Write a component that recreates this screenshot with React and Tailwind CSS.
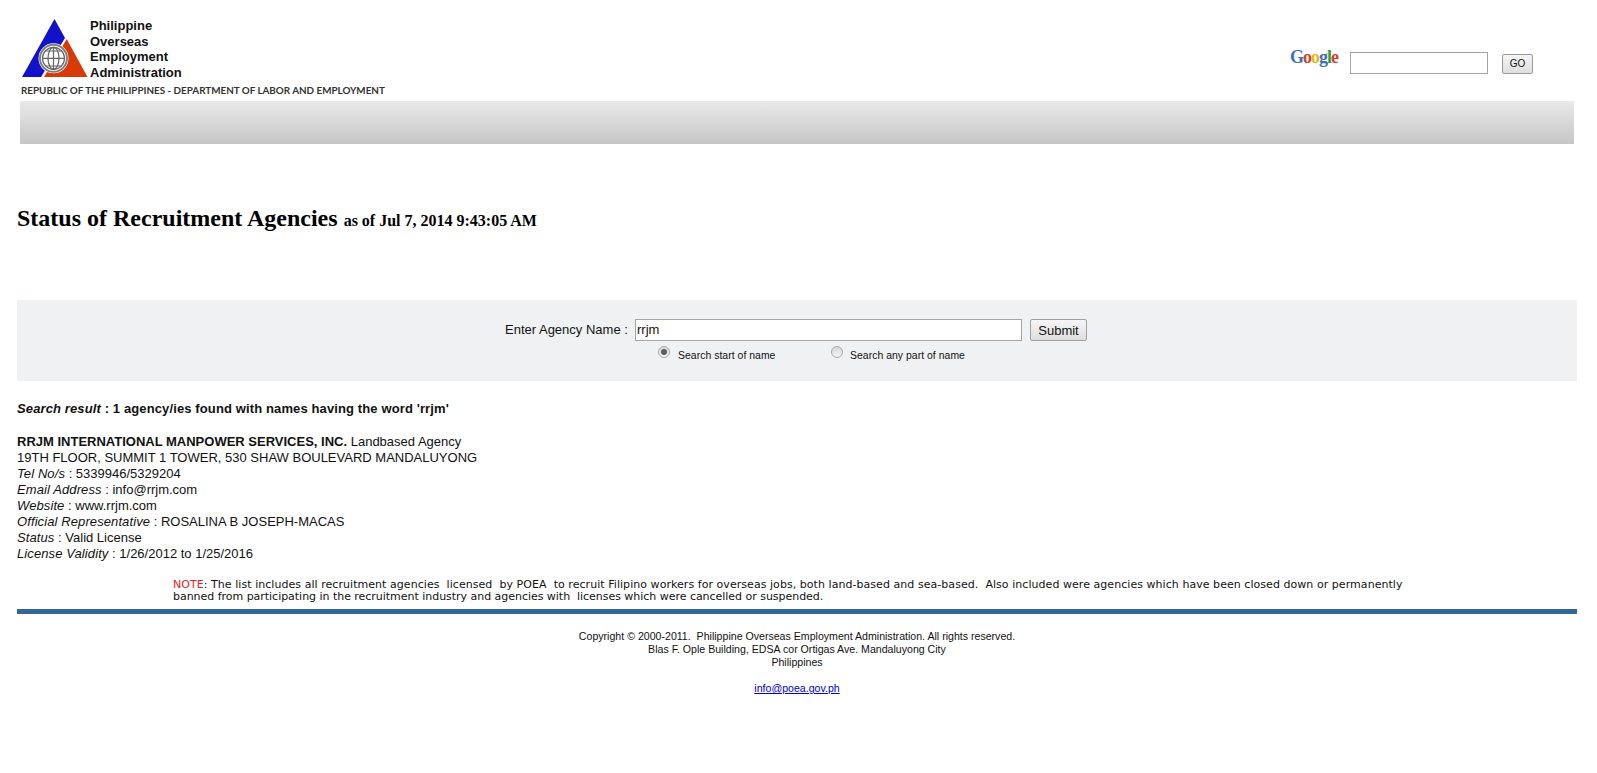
import React from "react";

function Logo() {
  return (
    <svg width="68" height="59" viewBox="0 0 68 59" className="block">
      <path d="M32.500 0 L43 19 L19 58 L0 58 Z" fill="#1212c8" />
      <path d="M44.700 20 L65.500 58 L22 58 Z" fill="#d83a08" />
      <circle cx="31.500" cy="39.300" r="15" fill="#fff" />
      <circle cx="31.500" cy="39.300" r="13.500" fill="none" stroke="#808080" strokeWidth="2" />
      <circle cx="31.500" cy="39.300" r="11" fill="none" stroke="#666" strokeWidth="1.200" />
      <ellipse cx="31.500" cy="39.300" rx="5.500" ry="11" fill="none" stroke="#666" strokeWidth="1.200" />
      <path d="M20.500 39.300 H42.500 M23 32 H40 M23 47 H40 M31.500 28.300 V50.300" fill="none" stroke="#666" strokeWidth="1.200" />
    </svg>
  );
}

function Radio({ checked }) {
  return (
    <span className="flex h-[12px] w-[12px] items-center justify-center rounded-full border border-[#a8a8a8] bg-gradient-to-b from-[#d8d8d8] to-[#f4f4f4]">
      {checked && <span className="h-[6px] w-[6px] rounded-full bg-[#5c5c5c]" />}
    </span>
  );
}

function Label({ children }) {
  return <i className="tracking-[0.1px]">{children}</i>;
}

export default function App() {
  return (
    <div className="min-h-[773px] bg-white font-['Liberation_Sans',Arial,sans-serif] text-black">
      <div className="flex justify-between pl-[20px] pr-[64px]">
        <div className="pt-[19px]">
          <div className="flex h-[64px] pl-[2px]">
            <Logo />
            <div className="mt-[-1px] text-[13px] font-bold leading-[15.5px] text-[#111]">
              <div>Philippine</div>
              <div>Overseas</div>
              <div>Employment</div>
              <div>Administration</div>
            </div>
          </div>
          <div className="whitespace-nowrap pl-[1px] font-['Lato',sans-serif] text-[9.85px] font-bold leading-[14px] text-[#333]">
            REPUBLIC OF THE PHILIPPINES - DEPARTMENT OF LABOR AND EMPLOYMENT
          </div>
        </div>
        <div className="flex items-start pt-[52px]">
          <div className="mt-[-7px] w-[48px] font-['Liberation_Serif',serif] text-[18px] font-bold leading-[24px] tracking-[-1px]">
            <span className="text-[#3b6fc4]">G</span>
            <span className="text-[#d8402a]">o</span>
            <span className="text-[#e8b810]">o</span>
            <span className="text-[#3b6fc4]">g</span>
            <span className="text-[#3a9a3a]">l</span>
            <span className="text-[#d8402a]">e</span>
          </div>
          <div className="ml-[12px] h-[22px] w-[138px] border border-[#a5a5a5] bg-white" />
          <button className="ml-[14px] mt-[2px] h-[20px] w-[31px] rounded-[2px] border border-[#9a9a9a] bg-gradient-to-b from-[#f6f6f6] to-[#dedede] text-[10px] leading-none text-[#111]">
            GO
          </button>
        </div>
      </div>

      <div className="ml-[20px] mr-[23px] mt-[4px] h-[43px] bg-gradient-to-b from-[#e9e9e9] to-[#c6c6c6]" />

      <div className="pl-[17px] pr-[20px]">
        <h1 className="mt-[60px] whitespace-nowrap font-['Liberation_Serif',serif] text-[24px] font-bold leading-[28px]">
          Status of Recruitment Agencies{" "}
          <span className="text-[16px]">as of Jul 7, 2014 9:43:05 AM</span>
        </h1>

        <div className="mt-[65px] h-[81px] bg-[#f0f1f3] pt-[19px]">
          <div className="flex h-[22px] items-center pl-[488px] text-[13px] text-[#111]">
            <span className="w-[130px] whitespace-nowrap">Enter Agency Name :</span>
            <div className="h-[22px] w-[387px] border border-[#a5a5a5] bg-white pl-[1px] leading-[20px]">rrjm</div>
            <button className="ml-[8px] h-[22px] w-[57px] rounded-[2px] border border-[#a0a0a0] bg-gradient-to-b from-[#f6f6f6] to-[#dedede] text-[13px] leading-none text-[#111]">
              Submit
            </button>
          </div>
          <div className="mt-[5px] flex items-start pl-[641px] text-[10.4px] leading-[14px] tracking-[0.05px] text-[#111]">
            <Radio checked />
            <span className="ml-[8px] mt-[3px] w-[153px] whitespace-nowrap">Search start of name</span>
            <Radio />
            <span className="ml-[7px] mt-[3px] whitespace-nowrap">Search any part of name</span>
          </div>
        </div>

        <div className="mt-[20px] text-[13px] font-bold leading-[16px] tracking-[0.12px] text-[#111]">
          <i>Search result</i> : 1 agency/ies found with names having the word 'rrjm'
        </div>

        <div className="mt-[17px] text-[13px] leading-[16px] text-[#111]">
          <div><b>RRJM INTERNATIONAL MANPOWER SERVICES, INC.</b> Landbased Agency</div>
          <div>19TH FLOOR, SUMMIT 1 TOWER, 530 SHAW BOULEVARD MANDALUYONG</div>
          <div><Label>Tel No/s</Label> : 5339946/5329204</div>
          <div><Label>Email Address</Label> : info@rrjm.com</div>
          <div><Label>Website</Label> : www.rrjm.com</div>
          <div><Label>Official Representative</Label> : ROSALINA B JOSEPH-MACAS</div>
          <div><Label>Status</Label> : Valid License</div>
          <div><Label>License Validity</Label> : 1/26/2012 to 1/25/2016</div>
        </div>

        <div className="mt-[17px] whitespace-pre pl-[156px] font-['DejaVu_Sans',Verdana,sans-serif] text-[11px] leading-[12px] text-[#111]">
          <div className="tracking-[0.05px]">
            <span className="text-[#e8202a]">NOTE</span>: The list includes all recruitment agencies  licensed  by POEA  to recruit Filipino workers for overseas jobs, both land-based and sea-based.  Also included were agencies which have been closed down or permanently
          </div>
          <div className="tracking-[-0.03px]">banned from participating in the recruitment industry and agencies with  licenses which were cancelled or suspended.</div>
        </div>

        <div className="mt-[6px] h-[5px] bg-[#336699]" />

        <div className="mt-[16px] whitespace-pre text-center text-[10.6px] leading-[13px] text-[#111]">
          <div>Copyright © 2000-2011.  Philippine Overseas Employment Administration. All rights reserved.</div>
          <div>Blas F. Ople Building, EDSA cor Ortigas Ave. Mandaluyong City</div>
          <div>Philippines</div>
          <div className="mt-[13px]"><a href="#" className="text-[#0000ee] underline">info@poea.gov.ph</a></div>
        </div>
      </div>
    </div>
  );
}
